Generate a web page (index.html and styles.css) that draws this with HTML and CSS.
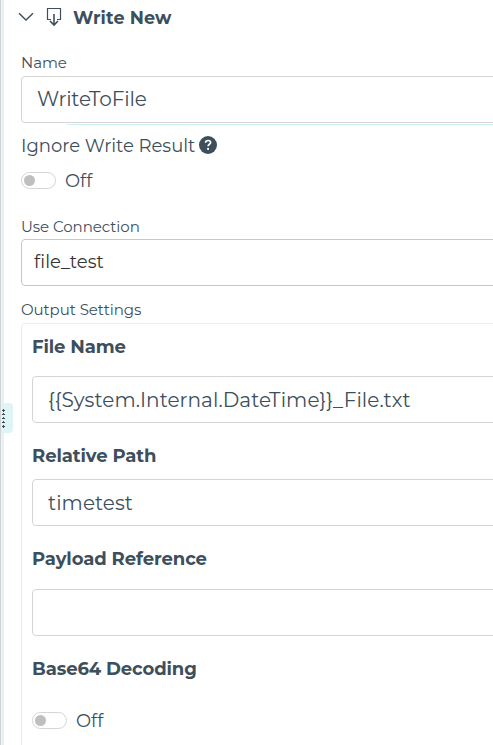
FILE: index.html
```html
<!DOCTYPE html>
<html lang="en">
<head>
  <meta charset="UTF-8">
  <meta name="viewport" content="width=device-width, initial-scale=1.0">
  <title>Write New</title>
  <link rel="stylesheet" href="styles.css">
</head>
<body>
  <div class="panel">
    <div class="resize-handle">
      <svg width="6" height="20" viewBox="0 0 6 20" fill="#3d4f5c" shape-rendering="crispEdges">
        <path d="M0 2h1v1H0zM2 2h3v1H2zM3 1h1v3H3zM0 6h1v1H0zM2 6h3v1H2zM3 5h1v2H3zM0 10h1v1H0zM2 10h3v1H2zM3 9h1v2H3zM0 14h1v1H0zM2 14h3v1H2zM3 13h1v2H3zM0 18h1v1H0zM2 18h3v1H2zM3 17h1v3H3z"/>
      </svg>
    </div>

    <div class="header">
      <svg class="chevron" width="16" height="10" viewBox="0 0 16 10" fill="none" stroke="#3d4f5c" stroke-width="1.4">
        <path d="M1 1.2l7 6.8 7-6.8"/>
      </svg>
      <svg class="write-icon" width="16" height="20" viewBox="0 0 16 20" fill="none" stroke="#3d4f5c" stroke-width="1.2">
        <path d="M5 12.5H1.5v-11h13v11H11"/>
        <path d="M8 7v10M4 14l4 4 4-4" stroke-width="1.6"/>
      </svg>
      <h2 class="title">Write New</h2>
    </div>

    <form class="settings-form">
      <label class="form-label name-label" for="name">Name</label>
      <input type="text" id="name" class="form-input" value="WriteToFile">
      <div class="underline"></div>

      <div class="ignore-label">
        <span>Ignore Write Result</span>
        <svg class="help-icon" width="18" height="18" viewBox="0 0 18 18">
          <circle cx="9" cy="9" r="9" fill="#3d4f5c"/>
          <path d="M6.5 6.8C6.6 5.2 7.6 4.5 9.1 4.5c1.5 0 2.5.8 2.5 2.1 0 1.7-2.5 1.7-2.5 3.7" fill="none" stroke="#fff" stroke-width="1.7"/>
          <circle cx="9.1" cy="12.9" r="1.1" fill="#fff"/>
        </svg>
      </div>
      <div class="toggle-row">
        <span class="toggle"></span>
        <span class="toggle-text">Off</span>
      </div>

      <label class="form-label connection-label" for="connection">Use Connection</label>
      <input type="text" id="connection" class="form-input connection-input" value="file_test">

      <div class="form-label output-label">Output Settings</div>
      <div class="output-settings">
        <label class="group-label file-label" for="fileName">File Name</label>
        <input type="text" id="fileName" class="form-input group-input" value="{{System.Internal.DateTime}}_File.txt">

        <label class="group-label path-label" for="relativePath">Relative Path</label>
        <input type="text" id="relativePath" class="form-input group-input" value="timetest">

        <label class="group-label payload-label" for="payload">Payload Reference</label>
        <input type="text" id="payload" class="form-input group-input" value="">

        <div class="group-label decoding-label">Base64 Decoding</div>
        <div class="toggle-row decoding-toggle">
          <span class="toggle"></span>
          <span class="toggle-text">Off</span>
        </div>
      </div>
    </form>
  </div>
</body>
</html>
```

FILE: styles.css
```css
* {
  box-sizing: border-box;
}

body {
  margin: 0;
  background: #fff;
  color: #3d4f5c;
  font-family: Montserrat, Inter, sans-serif;
  overflow: hidden;
}

.panel {
  position: relative;
  height: 745px;
  padding-left: 17px;
  border-left: 1px solid #d3d3d3;
  box-shadow: inset 1px 0 #f3f3f3, inset 3px 0 #e0f4f6;
  overflow: hidden;
}

.resize-handle {
  position: absolute;
  left: -1px;
  top: 403px;
  width: 13px;
  height: 30px;
  padding-top: 5px;
  border-radius: 0 4px 4px 0;
  background: #e0f4f6;
}

.resize-handle svg {
  display: block;
}

.header {
  display: flex;
  height: 36px;
}

.chevron {
  margin-top: 12px;
}

.write-icon {
  margin: 7px 0 0 12px;
}

.title {
  margin: 7px 0 0 11px;
  font-size: 17.5px;
  line-height: 22px;
  font-weight: 700;
  letter-spacing: 0.15px;
}

.settings-form {
  padding-left: 3px;
}

.form-label {
  display: block;
  height: 20px;
  line-height: 20px;
  font-size: 15px;
  font-weight: 400;
  letter-spacing: -0.05px;
}

.name-label {
  margin: 17px 0 3px;
}

.form-input {
  display: block;
  width: 500px;
  height: 47px;
  padding: 0 15px 2px;
  border: 1px solid #d5d5d5;
  border-radius: 4px;
  background: #fff;
  color: inherit;
  font-family: inherit;
  font-size: 20px;
  font-weight: 400;
  letter-spacing: -0.1px;
}

.underline {
  height: 1px;
  margin: 1px 0 0 46px;
  background: #cdeef3;
}

.ignore-label {
  display: flex;
  margin-top: 8px;
  font-size: 18px;
  line-height: 26px;
  font-weight: 400;
}

.help-icon {
  margin: 3px 0 0 4px;
}

.toggle-row {
  display: flex;
  align-items: center;
  height: 24px;
  margin-top: 9px;
}

.toggle {
  width: 35px;
  height: 17px;
  padding: 2px;
  border: 1px solid #d5d5d5;
  border-radius: 9px;
}

.toggle::before {
  content: "";
  display: block;
  width: 11px;
  height: 11px;
  border-radius: 50%;
  background: #bfbfbf;
}

.toggle-text {
  margin-left: 9px;
  padding-top: 1px;
  font-size: 18px;
  font-weight: 400;
}

.connection-label {
  margin: 25px 0 2px;
}

.connection-input {
  padding-left: 12px;
  border-color: #c8c8c8;
  color: #333;
  font-size: 18px;
  letter-spacing: 0.1px;
}

.output-label {
  margin: 14px 0 3px;
}

.output-settings {
  width: 500px;
  height: 440px;
  padding-left: 10px;
  border: 1px solid #ececec;
  border-radius: 4px;
}

.group-label {
  display: block;
  height: 24px;
  line-height: 24px;
  font-size: 18px;
  font-weight: 700;
  letter-spacing: -0.1px;
}

.group-input {
  padding-bottom: 0;
  letter-spacing: 0.06px;
}

.file-label {
  margin: 11px 0 17px;
}

.path-label {
  margin: 21px 0 11px;
}

.payload-label {
  margin: 21px 0 18px;
}

.decoding-label {
  margin-top: 21px;
}

.decoding-toggle {
  margin-top: 27px;
}
```
